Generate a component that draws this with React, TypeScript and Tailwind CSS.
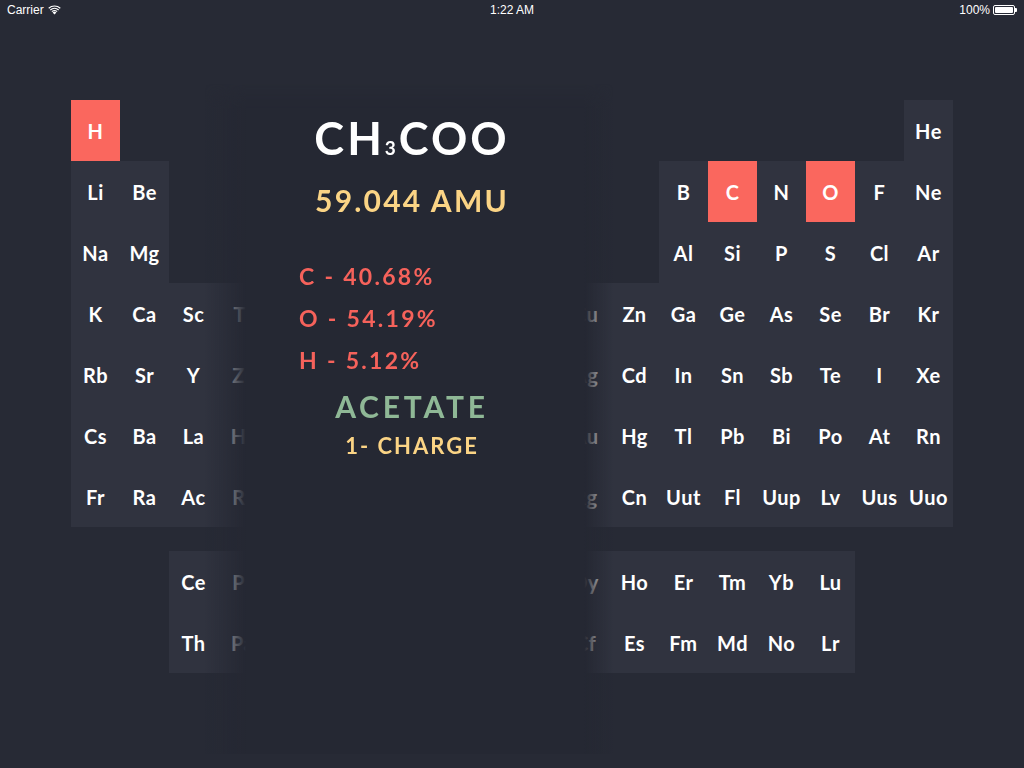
import React from 'react';

const E = '';

const MAIN: string[][] = [
  ['H', E, E, E, E, E, E, E, E, E, E, E, E, E, E, E, E, 'He'],
  ['Li', 'Be', E, E, E, E, E, E, E, E, E, E, 'B', 'C', 'N', 'O', 'F', 'Ne'],
  ['Na', 'Mg', E, E, E, E, E, E, E, E, E, E, 'Al', 'Si', 'P', 'S', 'Cl', 'Ar'],
  ['K', 'Ca', 'Sc', 'Ti', 'V', 'Cr', 'Mn', 'Fe', 'Co', 'Ni', 'Cu', 'Zn', 'Ga', 'Ge', 'As', 'Se', 'Br', 'Kr'],
  ['Rb', 'Sr', 'Y', 'Zr', 'Nb', 'Mo', 'Tc', 'Ru', 'Rh', 'Pd', 'Ag', 'Cd', 'In', 'Sn', 'Sb', 'Te', 'I', 'Xe'],
  ['Cs', 'Ba', 'La', 'Hf', 'Ta', 'W', 'Re', 'Os', 'Ir', 'Pt', 'Au', 'Hg', 'Tl', 'Pb', 'Bi', 'Po', 'At', 'Rn'],
  ['Fr', 'Ra', 'Ac', 'Rf', 'Db', 'Sg', 'Bh', 'Hs', 'Mt', 'Ds', 'Rg', 'Cn', 'Uut', 'Fl', 'Uup', 'Lv', 'Uus', 'Uuo'],
];

const SERIES: string[][] = [
  [E, E, 'Ce', 'Pr', 'Nd', 'Pm', 'Sm', 'Eu', 'Gd', 'Tb', 'Dy', 'Ho', 'Er', 'Tm', 'Yb', 'Lu', E, E],
  [E, E, 'Th', 'Pa', 'U', 'Np', 'Pu', 'Am', 'Cm', 'Bk', 'Cf', 'Es', 'Fm', 'Md', 'No', 'Lr', E, E],
];

// elements in the selected compound
const ACTIVE = ['H', 'C', 'O'];

// columns sitting fully under the info panel: their labels can't be seen
const HIDDEN_COLS = [4, 5, 6, 7, 8, 9];

const Cell = ({ sym, hidden }: { sym: string; hidden: boolean }) => {
  if (!sym) return <div />;
  const on = ACTIVE.includes(sym);
  return (
    <div
      title={sym}
      className={
        'flex items-center justify-center text-white font-bold text-[20px] tracking-[0.5px] ' +
        (on ? 'bg-[#fa675e]' : 'bg-[#30333f]')
      }
    >
      {hidden ? null : sym}
    </div>
  );
};

const Table = ({ rows }: { rows: string[][] }) => (
  <div className="grid grid-cols-[repeat(18,49px)] auto-rows-[61px]">
    {rows.map((row, r) =>
      row.map((s, c) => <Cell key={r * 18 + c} sym={s} hidden={HIDDEN_COLS.includes(c)} />)
    )}
  </div>
);

const StatusBar = () => (
  <div className="h-5 flex items-center justify-between px-[7px] text-white text-[12px] font-['Liberation_Sans',Arial,sans-serif]">
    <div className="flex items-center gap-[4px] w-[120px]">
      <span>Carrier</span>
      <svg width="13" height="10" viewBox="0 0 13 10" fill="white">
        <path d="M6.5 9.5 L4.6 7.4 A2.8 2.8 0 0 1 8.4 7.4 Z" />
        <path d="M3.5 6.2 A4.6 4.6 0 0 1 9.5 6.2 L8.7 7 A3.5 3.5 0 0 0 4.3 7 Z" />
        <path d="M1.9 4.5 A6.9 6.9 0 0 1 11.1 4.5 L10.3 5.4 A5.7 5.7 0 0 0 2.7 5.4 Z" />
        <path d="M0.3 2.8 A9.2 9.2 0 0 1 12.7 2.8 L11.9 3.7 A8 8 0 0 0 1.1 3.7 Z" />
      </svg>
    </div>
    <span>1:22 AM</span>
    <div className="flex items-center justify-end gap-[3px] w-[120px]">
      <span>100%</span>
      <div className="flex items-center">
        <div className="w-[22px] h-[10px] border border-white rounded-[2px] p-[1px]">
          <div className="w-full h-full bg-white rounded-[1px]" />
        </div>
        <div className="w-[2px] h-[4px] bg-white rounded-r-[1px]" />
      </div>
    </div>
  </div>
);

export default function App() {
  return (
    <div className="w-[1024px] h-[768px] bg-[#272a35] overflow-hidden font-['Lato','Open_Sans',sans-serif] relative">
      <StatusBar />

      <div className="pt-[80px] pl-[71px] flex flex-col gap-[24px]">
        <Table rows={MAIN} />
        <Table rows={SERIES} />
      </div>

      {/* compound info panel over the transition metals */}
      <div className="absolute left-[205px] top-[84px] w-[408px] h-[670px] bg-[linear-gradient(to_right,rgba(37,40,51,0),#252833_10%,#252833_93%,rgba(37,40,51,0))] [mask-image:linear-gradient(to_bottom,transparent,black_24px)]">
        <div className="flex flex-col items-center pl-[6px] pt-[32px]">
          <div className="text-white font-bold text-[45px] leading-[45px] tracking-[3px] flex items-baseline">
            <span>CH</span>
            <span className="text-[19px] leading-none">3</span>
            <span>COO</span>
          </div>
          <div className="text-[#fbd485] font-bold text-[30px] leading-[30px] tracking-[2.2px] mt-[24px]">
            59.044 AMU
          </div>
        </div>
        <div className="flex flex-col items-start gap-[19px] pl-[94px] mt-[50px] text-[#f6625b] font-bold text-[23px] leading-[23px] tracking-[2.3px]">
          <span>C - 40.68%</span>
          <span>O - 54.19%</span>
          <span>H - 5.12%</span>
        </div>
        <div className="flex flex-col items-center pl-[6px] mt-[19px]">
          <div className="text-[#8fb896] font-bold text-[30px] leading-[30px] tracking-[3.8px]">ACETATE</div>
          <div className="text-[#fbd485] font-bold text-[22px] leading-[22px] tracking-[2px] mt-[14px]">1- CHARGE</div>
        </div>
      </div>
    </div>
  );
}
